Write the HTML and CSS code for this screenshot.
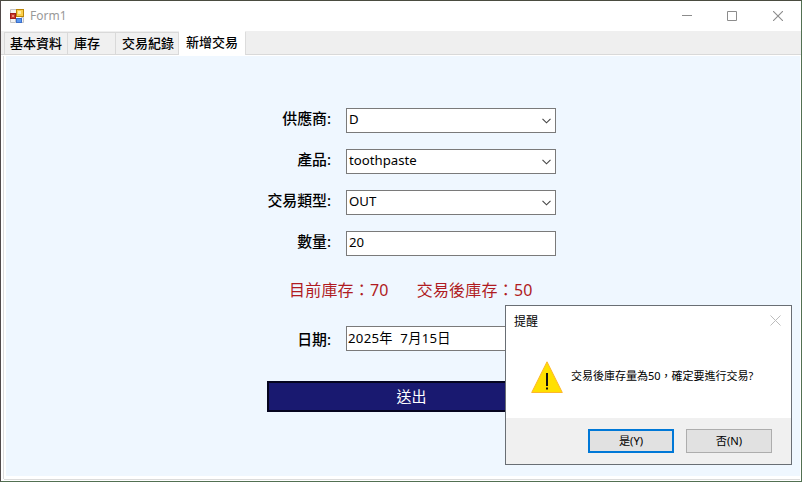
FILE: index.html
```html
<!DOCTYPE html>
<html lang="zh-Hant">
<head>
<meta charset="utf-8">
<title>Form1</title>
<link rel="stylesheet" href="styles.css">
</head>
<body>
<div class="window">
  <header class="titlebar">
    <svg class="app-icon" width="14" height="14" viewBox="0 0 14 14">
      <path d="M.5 .5h6v4h-6zM.5 9.500h5v4h-5zM11.500 8.500h2v5h-2z" fill="#f4f4f4" stroke="#c4c4c4"/>
      <rect x=".5" y="4.500" width="5" height="5" fill="#c8382c" stroke="#a01c18"/>
      <rect x="2" y="6" width="2" height="2" fill="#ee8a78"/>
      <rect x="6.500" y=".5" width="7" height="7" fill="#fbcf4a" stroke="#bd8708"/>
      <rect x="8" y="2" width="3" height="3" fill="#ffeaa0"/>
      <rect x="6.500" y="9.500" width="5" height="4" fill="#5a98ef" stroke="#3c70cc"/>
    </svg>
    <span class="caption">Form1</span>
    <div class="controls">
      <svg width="10" height="10"><path d="M0 4.500h10" stroke="#8c8c8c"/></svg>
      <svg width="10" height="10"><path d="M.5 .5h9v9h-9z" fill="none" stroke="#8c8c8c"/></svg>
      <svg class="close" width="10" height="10"><path d="M0 0L10 10M10 0L0 10" stroke="#8c8c8c" stroke-width="1.100"/></svg>
    </div>
  </header>
  <nav class="tabs">
    <span class="tab tab-basic">基本資料</span>
    <span class="tab tab-stock">庫存</span>
    <span class="tab tab-log">交易紀錄</span>
    <span class="tab tab-new active">新增交易</span>
  </nav>
  <main class="page">
    <form class="form">
      <div class="row"><label>供應商:</label><div class="field">D<svg class="chevron" width="9" height="6"><path d="M.5 .8L4.500 4.800L8.500 .8" /></svg></div></div>
      <div class="row"><label>產品:</label><div class="field">toothpaste<svg class="chevron" width="9" height="6"><path d="M.5 .8L4.500 4.800L8.500 .8" /></svg></div></div>
      <div class="row"><label>交易類型:</label><div class="field">OUT<svg class="chevron" width="9" height="6"><path d="M.5 .8L4.500 4.800L8.500 .8" /></svg></div></div>
      <div class="row"><label>數量:</label><div class="field">20</div></div>
      <div class="summary"><span>目前庫存：70</span><span>交易後庫存：50</span></div>
      <div class="row date"><label>日期:</label><div class="field">2025年&nbsp; 7月15日</div></div>
      <button class="submit" type="button">送出</button>
    </form>
  </main>
</div>
<section class="dialog">
  <div class="dialog-head">
    <span>提醒</span>
    <svg width="11" height="11"><path d="M.5 .5L10.500 10.500M10.500 .5L.5 10.500" stroke="#bdbdbd"/></svg>
  </div>
  <div class="dialog-body">
    <svg width="32" height="32" viewBox="0 0 32 32">
      <path d="M16 .8L31.300 31.500H.7z" fill="#ffe000" stroke="#fdb62c"/>
      <path d="M15 12h2v13h-2zM15 26.500h2v2h-2z" fill="#111"/>
    </svg>
    <span class="message">交易後庫存量為50，確定要進行交易?</span>
  </div>
  <div class="dialog-foot">
    <button class="choice primary" type="button">是(Y)</button>
    <button class="choice" type="button">否(N)</button>
  </div>
</section>
</body>
</html>
```
FILE: styles.css
```css
* { box-sizing: border-box; }
body {
  margin: 0;
  width: 802px;
  height: 482px;
  overflow: hidden;
  font-family: "Noto Sans", "Noto Sans CJK TC", sans-serif;
  color: #000;
}
svg { display: block; flex: none; }
.window {
  width: 802px;
  height: 482px;
  display: flex;
  flex-direction: column;
  border: 1px solid #527052;
  border-left-color: #514a4a;
  border-top-color: #4a4c40;
  background: #fff;
}
.titlebar {
  height: 30px;
  display: flex;
  align-items: center;
  padding: 0 17px 0 9px;
}
.app-icon { margin-top: -1px; }
.caption {
  margin-left: 6px;
  font-size: 12px;
  line-height: 16px;
  color: #999;
}
.controls { display: flex; gap: 35px; margin: -1px 0 0 auto; padding-right: 1px; }
.controls .close { margin-left: 1px; }
.tabs {
  height: 24px;
  display: flex;
  align-items: flex-end;
  padding-left: 3px;
  background: #efefef;
  border-bottom: 1px solid #d9d9d9;
}
.tab {
  height: 22px;
  padding-left: 6px;
  border: 1px solid #d9d9d9;
  border-width: 1px 1px 0 0;
  background: #f0f0f0;
  font-size: 13px;
  line-height: 21px;
  white-space: nowrap;
  font-weight: 500;
}
.tab-basic { width: 64px; border-left-width: 1px; padding-left: 5px; }
.tab-stock { width: 48px; }
.tab-log { width: 63px; }
.tab-new { width: 67px; }
.tab.active {
  height: 24px;
  margin-bottom: -1px;
  padding-left: 7px;
  border-color: #fff;
  border-right-color: #dcdcdc;
  background: #fff;
  line-height: 20px;
}
.page {
  flex: 1;
  margin: 1px 1px 2px 3px;
  border: solid #fff;
  border-width: 0 0 3px 2px;
  background: #eff7ff;
  box-shadow: 0 1px #dcdcdc, -1px 0 #dcdcdc;
}
.form { width: 289px; margin: 52px 0 0 261px; }
.row { display: flex; height: 25px; margin-bottom: 16px; }
.row label {
  width: 64px;
  margin-right: 15px;
  text-align: right;
  font-size: 14.900px;
  font-weight: 500;
  line-height: 21px;
  white-space: nowrap;
}
.field {
  flex: 1;
  display: flex;
  justify-content: space-between;
  padding: 0 4px 0 2px;
  border: 1px solid #7a7a7a;
  background: #fff;
  font-size: 13.200px;
  line-height: 20px;
  white-space: nowrap;
}
.chevron { margin-top: 9px; fill: none; stroke: #444; stroke-width: 1.100; }
.summary {
  display: flex;
  gap: 28px;
  height: 24px;
  margin: 22px 0 0 22px;
  font-size: 16px;
  letter-spacing: .2px;
  line-height: 24px;
  color: #b01b22;
  white-space: nowrap;
}
.date { margin: 24px 0 30px; }
.date label { line-height: 27px; }
.date .field { padding-left: 1px; line-height: 23px; letter-spacing: .3px; }
.submit {
  display: block;
  width: 289px;
  height: 31px;
  padding: 0;
  border: 2px solid #05051f;
  background: #191970;
  color: #fff;
  font: 15px/27px "Noto Sans", "Noto Sans CJK TC", sans-serif;
}
.dialog {
  position: absolute;
  left: 505px;
  top: 305px;
  width: 287px;
  height: 160px;
  display: flex;
  flex-direction: column;
  border: 1px solid #696e74;
  background: #fff;
}
.dialog-head {
  display: flex;
  justify-content: space-between;
  align-items: center;
  height: 29px;
  padding: 0 10px 0 8px;
  font-size: 12px;
}
.dialog-body {
  flex: 1;
  display: flex;
  padding: 26px 0 0 25px;
}
.message {
  margin-left: 8px;
  font-size: 11px;
  line-height: 30px;
  white-space: nowrap;
}
.dialog-foot {
  height: 46px;
  display: flex;
  gap: 12px;
  padding: 11px 0 0 82px;
  background: #f0f0f0;
}
.choice {
  width: 86px;
  height: 24px;
  padding: 0;
  border: 1px solid #adadad;
  background: #e1e1e1;
  color: #000;
  font: 11.200px/20px "Noto Sans", "Noto Sans CJK TC", sans-serif;
}
.choice.primary { border: 2px solid #0078d7; }
```
